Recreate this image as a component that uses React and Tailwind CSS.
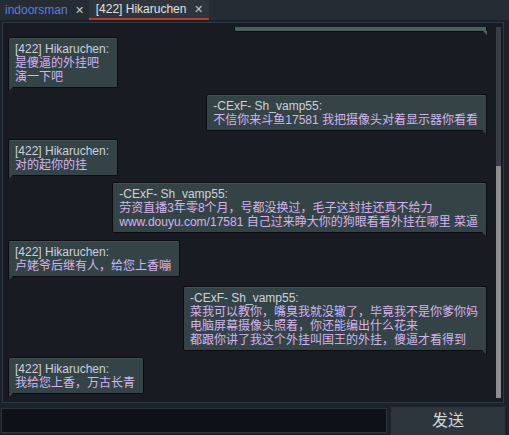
import React from "react";

const messages = [
  { side: "left", name: "[422] Hikaruchen:", lines: ["是傻逼的外挂吧", "演一下吧"], mt: "mt-[5px]" },
  { side: "right", name: "-CExF- Sh_vamp55:", lines: ["不信你来斗鱼17581 我把摄像头对着显示器你看看"], mt: "mt-[6px]" },
  { side: "left", name: "[422] Hikaruchen:", lines: ["对的起你的挂"], mt: "mt-[8px]" },
  {
    side: "right",
    name: "-CExF- Sh_vamp55:",
    lines: ["劳资直播3年零8个月，号都没换过，毛子这封挂还真不给力", "www.douyu.com/17581 自己过来睁大你的狗眼看看外挂在哪里 菜逼"],
    mt: "mt-[6px]",
  },
  { side: "left", name: "[422] Hikaruchen:", lines: ["卢姥爷后继有人，给您上香嘣"], mt: "mt-[7px]" },
  {
    side: "right",
    name: "-CExF- Sh_vamp55:",
    lines: ["菜我可以教你，嘴臭我就没辙了，毕竟我不是你爹你妈", "电脑屏幕摄像头照着，你还能编出什么花来", "都跟你讲了我这个外挂叫国王的外挂，傻逼才看得到"],
    mt: "mt-[9px]",
  },
  { side: "left", name: "[422] Hikaruchen:", lines: ["我给您上香，万古长青"], mt: "mt-[6px]" },
];

const Bubble = ({ msg }) => {
  const { side, name, lines, mt } = msg;
  const right = side === "right";
  return (
    <div className={`relative ${mt} ${right ? "self-end" : "self-start"}`}>
      <div className="bg-[#344446] border border-[#0a0c0f] rounded-[2px] pl-[6px] pr-[8px] pt-[4px] pb-[3px] leading-[14px] text-[12px] whitespace-nowrap shadow-[inset_0_1px_0_#41524f]">
        <div className="text-[#cfd0dc]">{name}</div>
        {lines.map((l) => (
          <div key={l} className="text-[#d4b4f0]">
            {l}
          </div>
        ))}
      </div>
      <div
        className={`absolute -bottom-[4px] w-[5px] h-[5px] bg-[#344446] ${
          right
            ? "right-0 border-r border-[#0a0c0f] [clip-path:polygon(0_0,100%_0,100%_100%)]"
            : "left-0 border-l border-[#0a0c0f] [clip-path:polygon(0_0,100%_0,0_100%)]"
        }`}
      />
    </div>
  );
};

const App = () => {
  return (
    <div
      className="w-[509px] h-[435px] bg-[#1d2228] flex flex-col overflow-hidden"
      style={{ fontFamily: '"Liberation Sans", "Noto Sans CJK SC", sans-serif' }}
    >
      <div className="h-[20px] bg-[#262c33] flex items-stretch text-[12px] whitespace-nowrap">
        <div className="flex items-center pl-[5px] pr-[5px] gap-[7px]">
          <span className="text-[#5a7be0]">indoorsman</span>
          <span className="text-[#c8c8c8] text-[11px]">✕</span>
        </div>
        <div className="flex items-center pl-[7px] pr-[6px] gap-[8px] bg-[#2e353c] border-b-2 border-[#c23a2c]">
          <span className="text-[#e2e2e2]">[422] Hikaruchen</span>
          <span className="text-[#c8c8c8] text-[11px]">✕</span>
        </div>
      </div>

      <div className="mt-[2px] mx-[2px] mr-[5px] h-[382px] border border-[#2b3a44] bg-[#181c22] flex">
        <div className="flex-1 flex flex-col pl-[5px] pr-[9px] overflow-hidden">
          <div className="relative self-end mt-[4px] w-[253px]">
            <div className="h-[5px] bg-[#4d605c] border border-t-0 border-[#0a0c0f] rounded-b-[2px]" />
            <div className="absolute -bottom-[3px] right-0 w-[4px] h-[4px] bg-[#4d605c] [clip-path:polygon(0_0,100%_0,100%_100%)]" />
          </div>
          {messages.map((m, i) => (
            <Bubble key={i} msg={m} />
          ))}
        </div>
        <div className="w-[5px] mr-[2px] mt-[4px] mb-[4px] flex flex-col">
          <div className="h-[139px] bg-[#3a3e44]" />
          <div className="flex-1 bg-[#8d8d8d]" />
        </div>
      </div>

      <div className="mt-[4px] flex h-[28px]">
        <div className="ml-[1px] mt-[1px] w-[386px] h-[25px] bg-[#0e1117] border border-[#283640]" />
        <button className="ml-[4px] w-[114px] h-[28px] bg-[#2e363d] text-[#d4d4d4] text-[16px] flex items-center justify-center">
          发送
        </button>
      </div>
    </div>
  );
};

export default App;
